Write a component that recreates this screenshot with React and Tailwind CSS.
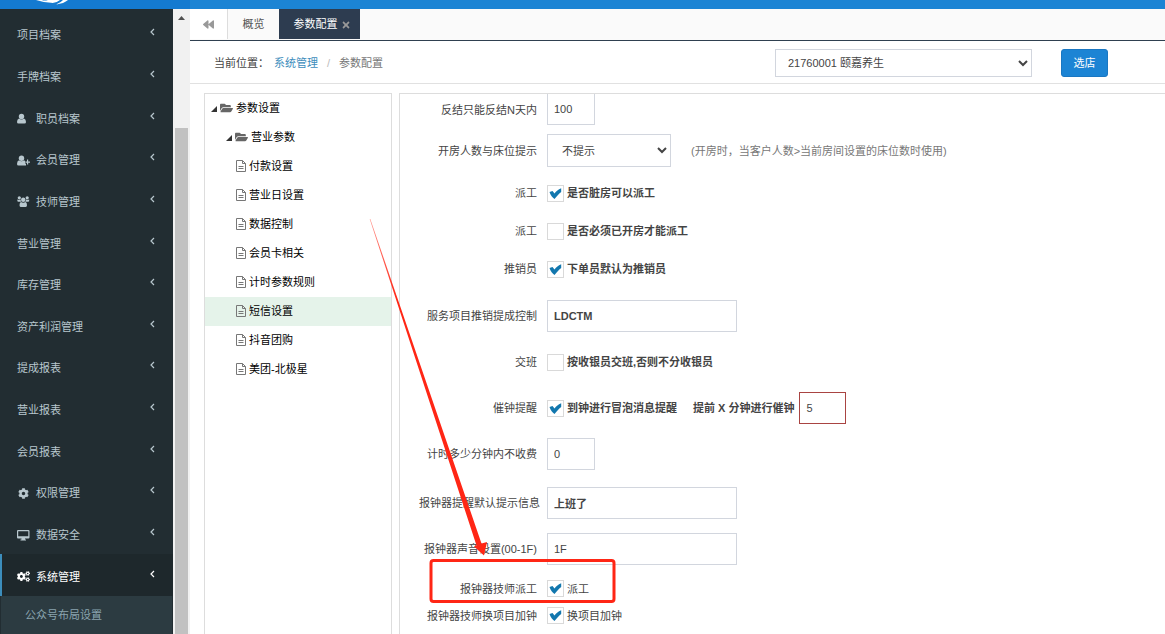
import { useState } from 'react'
import { FaCog, FaCogs, FaBackward, FaTimes, FaFolderOpen } from 'react-icons/fa'

const UserIcon = () => (
  <svg viewBox="0 0 13 11" className="h-[11px] w-[13px]" fill="currentColor"><circle cx="4.500" cy="3.500" r="2.700" /><path d="M2 5.500Q4.500 7.500 7 5.500Q9 6 9 9Q9 10.500 7.500 10.500H1.500Q0 10.500 0 9Q0 6 2 5.500Z" /></svg>
)
const UserPlusIcon = () => (
  <svg viewBox="0 0 13 11" className="h-[11px] w-[13px]" fill="currentColor"><circle cx="4.500" cy="3.200" r="2.700" /><path d="M2 5.200Q4.500 7.200 7 5.200L8 6V8.500H9V10.500H1.500Q0 10.500 0 9Q0 6 2 5.200ZM10 4.500H11.200V6.500H13V7.700H11.200V9.500H10V7.700H8.300V6.500H10Z" /></svg>
)
const UsersIcon = () => (
  <svg viewBox="0 0 13 11" className="h-[11px] w-[13px]" fill="currentColor"><circle cx="2.300" cy="1.800" r="1.600" /><circle cx="10.200" cy="1.800" r="1.600" /><circle cx="6.200" cy="3.700" r="2.200" /><path d="M.3 3.500Q2 4.300 3.600 3.500Q3.700 5 4.300 5.700H1.200Q0 5.700.3 3.500ZM12.200 3.500Q10.500 4.300 8.900 3.500Q8.800 5 8.200 5.700H11.300Q12.500 5.700 12.200 3.500ZM4 6Q6.200 7.300 8.500 6Q10 6.500 10 9.200Q10 11 8.700 11H3.700Q2.500 11 2.500 9.200Q2.500 6.500 4 6Z" /></svg>
)
const DesktopIcon = () => (
  <svg viewBox="0 0 13 11" className="h-[11px] w-[13px]" fill="currentColor"><path fillRule="evenodd" d="M1 0H11.500Q12.500 0 12.500 1V7.500Q12.500 8.500 11.500 8.500H8V9.500H9V10.500H3.500V9.500H4.500V8.500H1Q0 8.500 0 7.500V1Q0 0 1 0ZM1.200 1.200V6.200H11.300V1.200Z" /></svg>
)

const menus = [
  { name: '项目档案' },
  { name: '手牌档案' },
  { name: '职员档案', icon: UserIcon },
  { name: '会员管理', icon: UserPlusIcon },
  { name: '技师管理', icon: UsersIcon },
  { name: '营业管理' },
  { name: '库存管理' },
  { name: '资产利润管理' },
  { name: '提成报表' },
  { name: '营业报表' },
  { name: '会员报表' },
  { name: '权限管理', icon: FaCog },
  { name: '数据安全', icon: DesktopIcon },
  { name: '系统管理', icon: FaCogs, active: true },
]

const treeLeaves = ['付款设置', '营业日设置', '数据控制', '会员卡相关', '计时参数规则', '短信设置', '抖音团购', '美团-北极星']

const inputClass = 'border bg-white px-1.5 text-[11px] text-[#444] focus:outline-none focus:border-[#3c8dbc]'
const selectClass = 'border border-[#d2d6de] bg-white text-[11px] text-[#444] focus:outline-none'

function Sidebar() {
  return (
    <aside className="flex w-[173px] shrink-0 flex-col bg-[#222d32] pt-1">
      {menus.map(({ name, icon: Icon, active }) => (
        <a key={name} href="#" className={`flex min-h-[40px] flex-1 items-center border-l-2 pl-[15px] pr-[18px] pt-[3px] ${active ? 'border-[#3c8dbc] bg-[#1e282c] text-white' : 'border-transparent text-[#b8c7ce]'}`}>
          {Icon && <span className="mr-1.5 flex w-[13px] shrink-0"><Icon className="h-[11px] w-[13px]" /></span>}
          <span>{name}</span>
          <svg viewBox="0 0 5 8" className="mb-1.5 ml-auto h-2 w-[5px]" fill="none" stroke="currentColor" strokeWidth="1.200"><path d="M4 1L1 4L4 7" /></svg>
        </a>
      ))}
      <a href="#" className="mx-px flex h-[38px] shrink-0 items-center bg-[#2c3b41] pl-6 text-[#8aa4af]">公众号布局设置</a>
    </aside>
  )
}

function Scrollbar() {
  return (
    <div className="flex w-[17px] shrink-0 flex-col items-center bg-[#f1f1f1]">
      <svg viewBox="0 0 17 17" className="h-[17px] w-[17px]"><path d="M5 11L8.500 7L12 11Z" fill="#505050" /></svg>
      <div className="mt-[102px] w-[13px] flex-1 bg-[#c1c1c1]" />
    </div>
  )
}

function TreeArrow() {
  return <svg viewBox="0 0 6 6" className="mt-0.5 h-1.5 w-1.5"><path d="M6 0V6H0Z" fill="#333" /></svg>
}

function Tree() {
  return (
    <div className="w-[188px] shrink-0 border border-b-0 border-[#ddd] text-black">
      <div className="flex h-[29px] items-center pb-0.5 pl-1.5"><TreeArrow /><FaFolderOpen className="ml-[3px] mr-[3px] h-3 w-[13px] text-[#666]" />参数设置</div>
      <div className="flex h-[29px] items-center pb-0.5 pl-[21px]"><TreeArrow /><FaFolderOpen className="ml-[3px] mr-[3px] h-3 w-[13px] text-[#666]" />营业参数</div>
      {treeLeaves.map(name => (
        <div key={name} className={`flex h-[29px] items-center pb-0.5 pl-[31px] ${name === '短信设置' ? 'bg-[#e5f3ea]' : ''}`}>
          <svg viewBox="0 0 10 12" className="mr-[3px] h-3 w-2.5" fill="none" stroke="#777"><path d="M.5.500H6.500L9.500 3.500V11.500H.5ZM6.500.500V3.500H9.500M2.500 6.500H7.500M2.500 8.500H7.500" /></svg>
          {name}
        </div>
      ))}
    </div>
  )
}

function Row({ label, htmlFor, className = '', children }) {
  return (
    <div className={`flex items-center ${className}`}>
      <label htmlFor={htmlFor} className="mr-2.5 w-[118px] shrink-0 whitespace-nowrap text-right">{label}</label>
      {children}
    </div>
  )
}

function Check({ id, defaultChecked, bold, children }) {
  const [checked, setChecked] = useState(!!defaultChecked)
  return (
    <label className={`flex items-center ${bold ? 'font-bold' : ''}`}>
      <span className="relative mr-[3px] h-[17px] w-[17px]">
        <input id={id} type="checkbox" checked={checked} onChange={e => setChecked(e.target.checked)} className="block h-[17px] w-[17px] appearance-none border border-[#d9d9d9] bg-white" />
        {checked && <svg viewBox="0 0 17 17" className="pointer-events-none absolute inset-0"><path d="M2.500 7L5.500 6L7.500 8.500C9.500 6 11 4.800 14.200 3.300V7C11.500 9 10 11 7.500 14C5.500 12.500 3.500 10.500 2.500 7Z" fill="#1277ae" /></svg>}
      </span>
      {children}
    </label>
  )
}

function ConfigForm() {
  return (
    <form className="min-w-0 flex-1 border-l border-t border-[#ddd] pl-[19px]">
      <Row label="反结只能反结N天内" htmlFor="days" className="mb-[9px]">
        <input id="days" defaultValue="100" className={`${inputClass} h-[31px] w-12 border-t-0 border-[#d2d6de]`} />
      </Row>
      <Row label="开房人数与床位提示" htmlFor="bedTip">
        <select id="bedTip" className={`${selectClass} h-[33px] w-[124px] px-2.5`}><option>不提示</option></select>
        <span className="ml-5 text-[#777]">(开房时，当客户人数&gt;当前房间设置的床位数时使用)</span>
      </Row>

      <div className="mb-3 mt-[7px]">
        <Row label="派工" htmlFor="dirty" className="h-[38px]"><Check id="dirty" defaultChecked bold>是否脏房可以派工</Check></Row>
        <Row label="派工" htmlFor="opened" className="h-[38px]"><Check id="opened" bold>是否必须已开房才能派工</Check></Row>
        <Row label="推销员" htmlFor="seller" className="h-[38px]"><Check id="seller" defaultChecked bold>下单员默认为推销员</Check></Row>
      </div>

      <div className="flex flex-col gap-3.5">
        <Row label="服务项目推销提成控制" htmlFor="commission">
          <input id="commission" defaultValue="LDCTM" className={`${inputClass} h-8 w-[190px] border-[#d2d6de] font-bold`} />
        </Row>
        <Row label="交班" htmlFor="shift" className="h-8"><Check id="shift" bold>按收银员交班,否则不分收银员</Check></Row>
        <Row label="催钟提醒" htmlFor="remind">
          <Check id="remind" defaultChecked bold>到钟进行冒泡消息提醒</Check>
          <label htmlFor="minutes" className="ml-4 mr-[5px] font-bold">提前 X 分钟进行催钟</label>
          <input id="minutes" defaultValue="5" className={`${inputClass} h-8 w-[47px] border-[#a94442]`} />
        </Row>
        <Row label="计时多少分钟内不收费" htmlFor="free">
          <input id="free" defaultValue="0" className={`${inputClass} h-8 w-12 border-[#d2d6de]`} />
        </Row>
      </div>

      <div className="mb-2.5 mt-[17px] flex flex-col gap-3.5">
        <Row label="报钟器提醒默认提示信息" htmlFor="message">
          <input id="message" defaultValue="上班了" className={`${inputClass} h-8 w-[190px] border-[#d2d6de] font-bold`} />
        </Row>
        <Row label="报钟器声音设置(00-1F)" htmlFor="sound">
          <input id="sound" defaultValue="1F" className={`${inputClass} h-8 w-[190px] border-[#d2d6de]`} />
        </Row>
      </div>

      <Row label="报钟器技师派工" htmlFor="dispatch" className="h-[27px]"><Check id="dispatch" defaultChecked>派工</Check></Row>
      <Row label="报钟器技师换项目加钟" htmlFor="change" className="h-[27px]"><Check id="change" defaultChecked>换项目加钟</Check></Row>
    </form>
  )
}

// red marker drawn over the page: arrow plus frame
function Marker() {
  return (
    <svg className="pointer-events-none absolute left-0 top-0" width="640" height="620" fill="none">
      <defs>
        <linearGradient id="fade" x1="370" y1="220" x2="395" y2="300" gradientUnits="userSpaceOnUse">
          <stop offset="0" stopColor="#ff2615" stopOpacity="0.5" />
          <stop offset="1" stopColor="#ff2615" />
        </linearGradient>
      </defs>
      <path d="M369.700 219L370.300 219L481.500 543.500L487 542L484 555.500L474 546.500L476.500 545.500Z" fill="url(#fade)" />
      <rect x="431" y="560.500" width="183" height="41" rx="2.500" stroke="#ff2615" strokeWidth="3" />
    </svg>
  )
}

export default function App() {
  return (
    <div className="relative flex h-screen flex-col overflow-hidden bg-white font-['Liberation_Sans','Noto_Sans_CJK_SC',sans-serif] text-[11px] leading-4 text-[#444]">
      <header className="flex h-[9px] shrink-0 bg-[#1c84d4]">
        <div className="w-[190px] bg-[#147ad0]">
          <svg viewBox="0 0 40 9" className="ml-[34px] h-[9px] w-10"><path d="M2 0H8Q10 1 14 0H26Q22 3.500 17 2.800Q10 2.500 2 0ZM29 0H34Q30 3.500 22 4.500Q27 2.500 29 0Z" fill="#fff" /></svg>
        </div>
      </header>
      <div className="flex min-h-0 flex-1">
        <Sidebar />
        <Scrollbar />
        <main className="flex min-w-0 flex-1 flex-col">
          <nav className="flex h-8 shrink-0 border-b border-[#2f4050] bg-[#fafafa] pb-px">
            <button type="button" aria-label="向左" className="flex w-[38px] items-center justify-center border-r border-[#ddd] bg-white text-[#999]"><FaBackward className="h-[11px] w-[11px]" /></button>
            <button type="button" className="w-[51px] text-[#555]">概览</button>
            <button type="button" className="flex w-[81px] items-center justify-center bg-[#2d3c50] pl-1 text-white">参数配置<FaTimes className="ml-1 mt-0.5 h-2.5 w-2 text-[#999]" /></button>
          </nav>
          <div className="flex h-[43px] shrink-0 items-center border-b border-[#e1e1e1] pl-6 pr-[57px] pt-0.5">
            <span className="w-[60px]">当前位置：</span>
            <a href="#" className="text-[#3c8dbc]">系统管理</a>
            <span className="mx-[9px] text-[#bbb]">/</span>
            <span className="text-[#777]">参数配置</span>
            <select aria-label="门店" className={`${selectClass} ml-auto h-7 w-[257px] px-2`}><option>21760001 颐嘉养生</option></select>
            <button type="button" className="ml-[29px] h-7 w-[47px] rounded-[3px] border border-[#1a77c2] bg-[#1c84d4] text-white">选店</button>
          </div>
          <div className="flex min-h-0 flex-1 gap-[7px] pl-3.5 pt-[9px]">
            <Tree />
            <ConfigForm />
          </div>
        </main>
      </div>
      <Marker />
    </div>
  )
}
